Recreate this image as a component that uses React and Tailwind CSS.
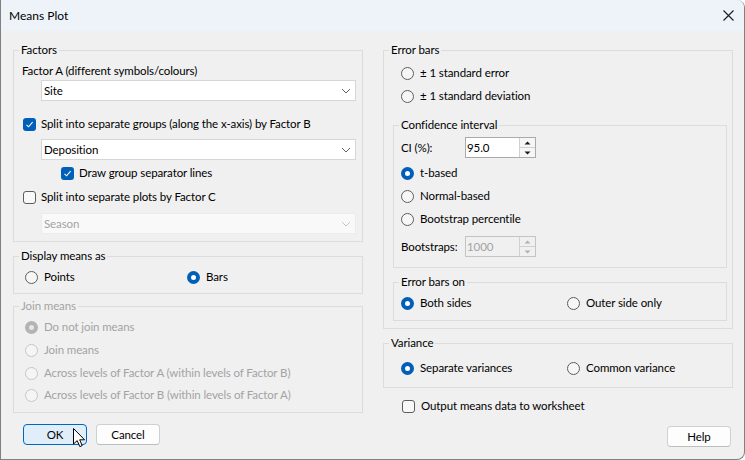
import React from "react";

function Radio({ checked, disabled, label, className = "" }) {
  let circle;
  if (checked && !disabled) {
    circle = (
      <span className="flex h-[13px] w-[13px] shrink-0 items-center justify-center rounded-full bg-[#005fb8]">
        <span className="h-[5px] w-[5px] rounded-full bg-white" />
      </span>
    );
  } else if (checked && disabled) {
    circle = (
      <span className="flex h-[13px] w-[13px] shrink-0 items-center justify-center rounded-full bg-[#b3b3b3]">
        <span className="h-[5px] w-[5px] rounded-full bg-[#e6e6e6]" />
      </span>
    );
  } else if (disabled) {
    circle = <span className="h-[13px] w-[13px] shrink-0 rounded-full border border-[#c6c6c6] bg-[#f5f5f5]" />;
  } else {
    circle = <span className="h-[13px] w-[13px] shrink-0 rounded-full border border-[#5d5d5d] bg-[#f6f6f6]" />;
  }
  return (
    <div className={`flex h-[16px] items-center gap-[6px] ${disabled ? "text-[#a3a3a3]" : "text-black"} ${className}`}>
      {circle}
      <span className="whitespace-nowrap">{label}</span>
    </div>
  );
}

function Checkbox({ checked, label, className = "" }) {
  return (
    <div className={`flex h-[16px] items-center gap-[5px] ${className}`}>
      {checked ? (
        <span className="flex h-[13px] w-[13px] shrink-0 items-center justify-center rounded-[3px] bg-[#005fb8]">
          <svg width="9" height="9" viewBox="0 0 9 9">
            <path d="M1.5 4.8 L3.6 6.8 L7.6 2.2" fill="none" stroke="white" strokeWidth="1.1" />
          </svg>
        </span>
      ) : (
        <span className="h-[13px] w-[13px] shrink-0 rounded-[3px] border border-[#5d5d5d] bg-[#f8f8f8]" />
      )}
      <span className="whitespace-nowrap">{label}</span>
    </div>
  );
}

function Select({ value, disabled, className = "" }) {
  return (
    <div
      className={`flex h-[21px] items-center justify-between border pl-[2px] pr-[4px] ${
        disabled ? "border-[#ececec] bg-[#f9f9f9] text-[#a3a3a3]" : "border-[#d6d6d6] bg-white text-black"
      } ${className}`}
    >
      <span>{value}</span>
      <svg width="10" height="6" viewBox="0 0 10 6">
        <path d="M1 1 L5 5 L9 1" fill="none" stroke={disabled ? "#c4c4c4" : "#606060"} strokeWidth="1" />
      </svg>
    </div>
  );
}

function Spin({ value, disabled }) {
  const c = disabled ? "#b0b0b0" : "#1a1a1a";
  return (
    <div
      className={`flex h-[21px] w-[71px] items-center justify-between border pl-[1px] ${
        disabled ? "border-[#c4c4c4] bg-[#f0f0f0] text-[#a3a3a3]" : "border-[#aaaaaa] bg-white text-black"
      }`}
    >
      <span>{value}</span>
      <div className="flex h-full w-[16px] flex-col border-l border-[#d0d0d0]">
        <div className={`flex flex-1 items-center justify-center border-b border-[#d0d0d0] ${disabled ? "bg-[#f0f0f0]" : "bg-[#f6f6f6]"}`}>
          <svg width="7" height="4" viewBox="0 0 7 4">
            <path d="M0.5 3.5 L3.5 0.5 L6.5 3.5 Z" fill={c} />
          </svg>
        </div>
        <div className={`flex flex-1 items-center justify-center ${disabled ? "bg-[#f0f0f0]" : "bg-[#f6f6f6]"}`}>
          <svg width="7" height="4" viewBox="0 0 7 4">
            <path d="M0.5 0.5 L3.5 3.5 L6.5 0.5 Z" fill={c} />
          </svg>
        </div>
      </div>
    </div>
  );
}

function Group({ title, disabled, className = "", children }) {
  return (
    <fieldset className={`m-0 min-w-0 border border-[#dcdcdc] p-0 ${className}`}>
      <legend className={`ml-[5px] px-[2px] leading-[16px] ${disabled ? "text-[#a3a3a3]" : "text-black"}`}>{title}</legend>
      {children}
    </fieldset>
  );
}

function Button({ label, primary, className = "" }) {
  return (
    <div
      className={`flex h-[21px] w-[64px] items-center justify-center rounded-[4px] border ${
        primary ? "border-[#0067c0] bg-[#e0eef9]" : "border-[#d0d0d0] border-b-[#bdbdbd] bg-[#fdfdfd]"
      } ${className}`}
    >
      {label}
    </div>
  );
}

export default function App() {
  return (
    <div className="relative flex h-[460px] w-[745px] flex-col overflow-hidden rounded-tr-[8px] rounded-br-[8px] border-b border-l border-r border-[#808080] bg-[#f0f0f0] font-['Lato',sans-serif] text-[11.5px] leading-[16px] tracking-[-0.1px] text-black">
      {/* Title bar */}
      <div className="flex h-[31px] shrink-0 items-center justify-between bg-[#eef3f9] pl-[8px] pr-[10px]">
        <span className="text-[12px] tracking-normal">Means Plot</span>
        <svg width="11" height="11" viewBox="0 0 11 11">
          <path d="M0.5 0.5 L10.5 10.5 M10.5 0.5 L0.5 10.5" stroke="#1a1a1a" strokeWidth="1.1" />
        </svg>
      </div>

      {/* Body */}
      <div className="grid grid-cols-[350px_350px] gap-x-[20px] pl-[12px] pt-[11px]">
        {/* Left column */}
        <div className="flex flex-col">
          <Group title="Factors" className="h-[200px]">
            <div className="flex flex-col pl-[8px] pr-[6px]">
              <div className="mt-[5px]">Factor A (different symbols/colours)</div>
              <Select value="Site" className="ml-[19px] mt-[1px]" />
              <Checkbox checked label="Split into separate groups (along the x-axis) by Factor B" className="ml-[1px] mt-[15px]" />
              <Select value="Deposition" className="ml-[19px] mt-[7px]" />
              <Checkbox checked label="Draw group separator lines" className="ml-[39px] mt-[5px]" />
              <Checkbox label="Split into separate plots by Factor C" className="ml-[1px] mt-[8px]" />
              <Select value="Season" disabled className="ml-[19px] mt-[8px]" />
            </div>
          </Group>

          <Group title="Display means as" className="mt-[6px] h-[46px]">
            <div className="mt-[5px] flex pl-[11px]">
              <Radio label="Points" className="w-[162px]" />
              <Radio checked label="Bars" />
            </div>
          </Group>

          <Group title="Join means" disabled className="mt-[4px] h-[115px]">
            <div className="flex flex-col pl-[11px]">
              <Radio disabled checked label="Do not join means" className="mt-[5px]" />
              <Radio disabled label="Join means" className="mt-[7px]" />
              <Radio disabled label="Across levels of Factor A (within levels of Factor B)" className="mt-[7px]" />
              <Radio disabled label="Across levels of Factor B (within levels of Factor A)" className="mt-[6px]" />
            </div>
          </Group>

          <div className="mt-[11px] flex gap-[9px] pl-[10px]">
            <div className="relative">
              <Button primary label="OK" />
              <svg className="absolute left-[50px] top-[4px]" width="13" height="20" viewBox="0 0 13 20">
                <path d="M0.5 0.5 L0.5 16 L4.2 12.6 L6.8 18.6 L9.2 17.6 L6.7 11.8 L11.6 11.8 Z" fill="white" stroke="black" strokeWidth="1" strokeLinejoin="round" />
              </svg>
            </div>
            <Button label="Cancel" />
          </div>
        </div>

        {/* Right column */}
        <div className="flex flex-col">
          <Group title="Error bars" className="h-[287px]">
            <div className="flex flex-col pl-[9px] pr-[5px]">
              <Radio label="± 1 standard error" className="ml-[8px] mt-[7px]" />
              <Radio label="± 1 standard deviation" className="ml-[8px] mt-[7px]" />

              <Group title="Confidence interval" className="mt-[13px] h-[151px]">
                <div className="flex flex-col pl-[7px]">
                  <div className="mt-[4px] flex items-center">
                    <span className="w-[64px]">CI (%):</span>
                    <Spin value="95.0" />
                  </div>
                  <Radio checked label="t-based" className="mt-[7px]" />
                  <Radio label="Normal-based" className="mt-[7px]" />
                  <Radio label="Bootstrap percentile" className="mt-[7px]" />
                  <div className="mt-[9px] flex items-center">
                    <span className="w-[64px]">Bootstraps:</span>
                    <Spin value="1000" disabled />
                  </div>
                </div>
              </Group>

              <Group title="Error bars on" className="mt-[6px] h-[47px]">
                <div className="mt-[5px] flex pl-[7px]">
                  <Radio checked label="Both sides" className="w-[166px]" />
                  <Radio label="Outer side only" />
                </div>
              </Group>
            </div>
          </Group>

          <Group title="Variance" className="mt-[6px] h-[53px]">
            <div className="mt-[9px] flex pl-[17px]">
              <Radio checked label="Separate variances" className="w-[166px]" />
              <Radio label="Common variance" />
            </div>
          </Group>

          <Checkbox label="Output means data to worksheet" className="ml-[19px] mt-[10px] gap-[6px]" />

          <div className="mt-[12px] flex justify-end pr-[2px]">
            <Button label="Help" />
          </div>
        </div>
      </div>
    </div>
  );
}
